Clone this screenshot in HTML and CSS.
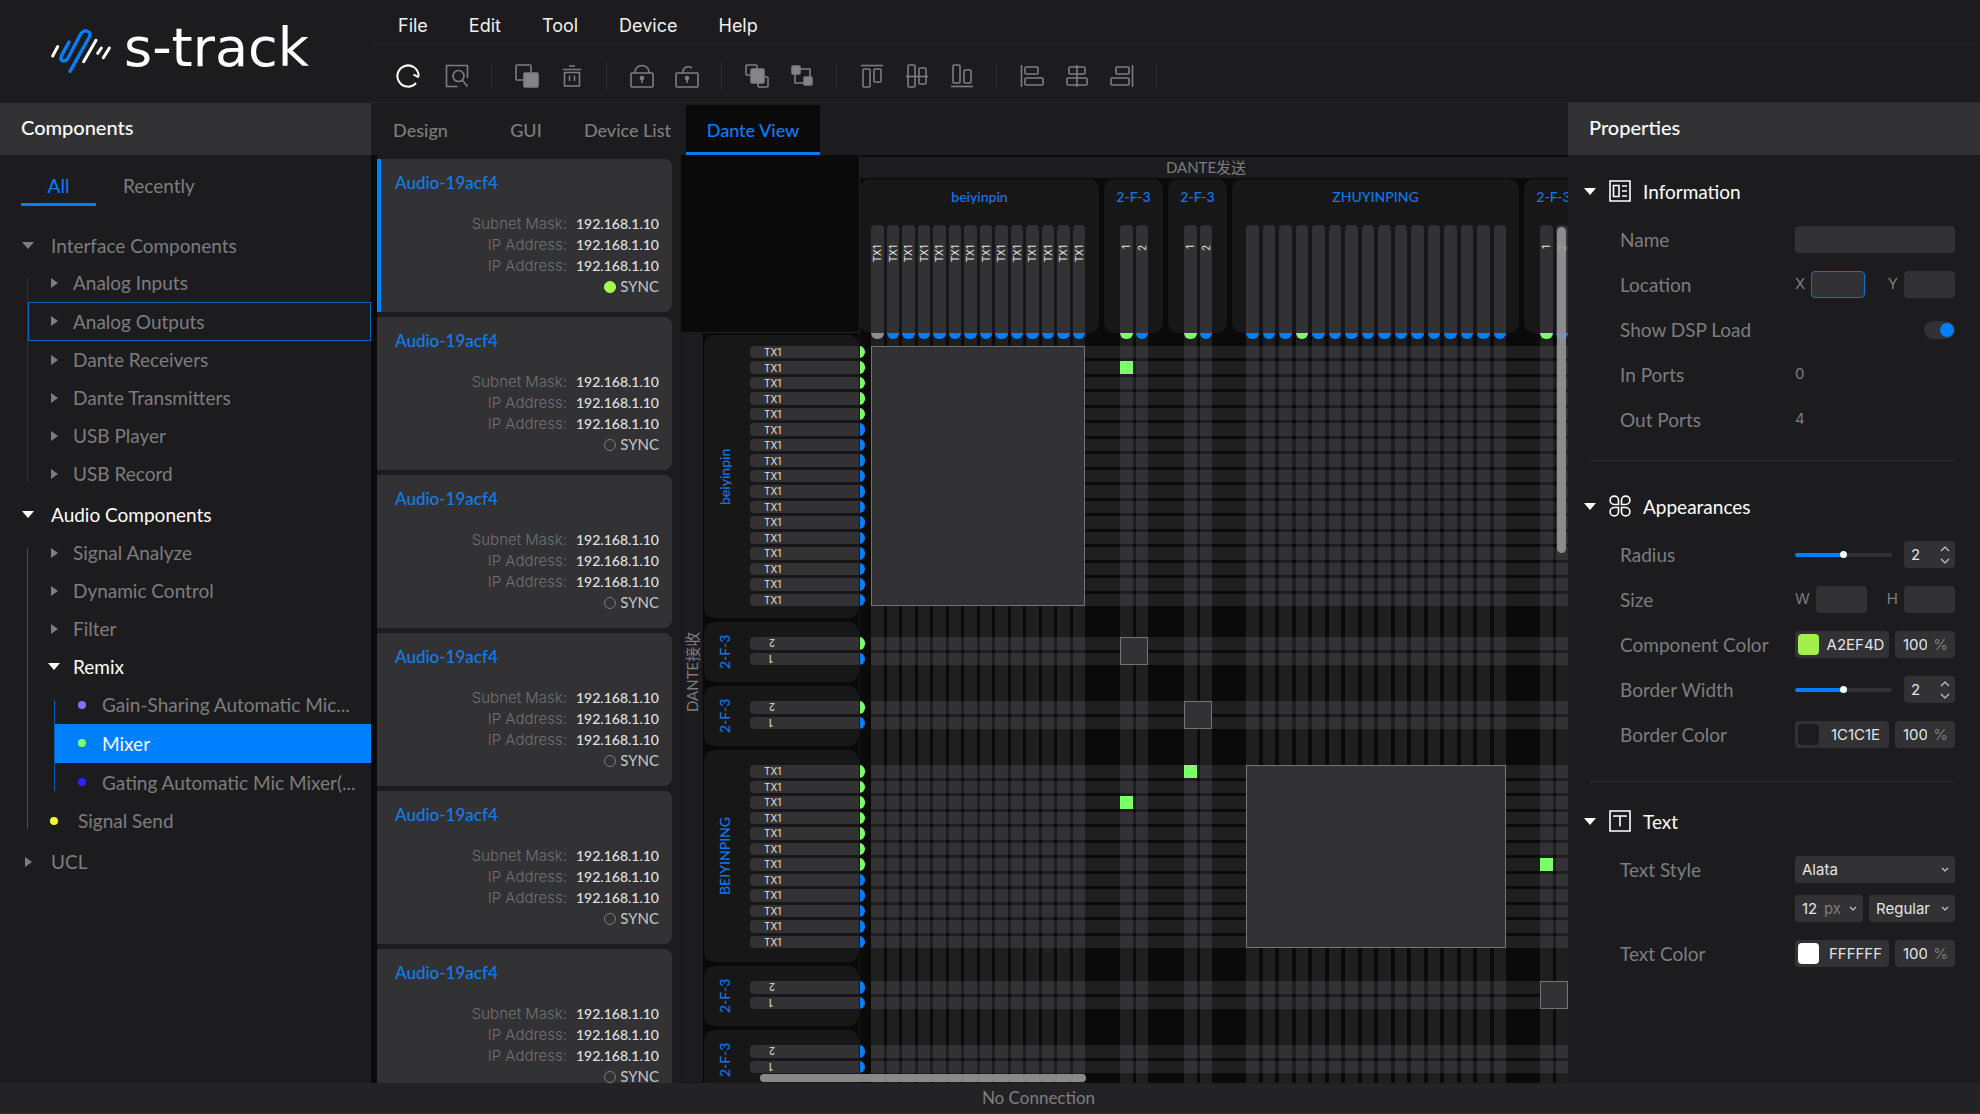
FILE: index.html
```
<!DOCTYPE html>
<html lang="en">
<head>
    <meta charset="UTF-8">
    <meta name="viewport" content="width=device-width, initial-scale=1.0">
    <title>s-track</title>
    <link rel="stylesheet" href="styles.css">
</head>
<body>
    <div class="app">
        <header class="header">
            <div class="logo">
                <svg class="logo-mark" viewBox="30 40 189 141" fill="none" stroke="#fff" stroke-width="9" stroke-linecap="round">
                    <path d="M53 96L38 124M168 77L131 141M184 100L173 116M208 100L190 129"/>
                    <path stroke="#0080ff" stroke-width="10" stroke-linejoin="round" d="M87 82L65 122Q58 138 71 139Q79 139 84 130L122 58Q129 47 140 49Q155 53 148 67L90 170"/>
                </svg>
                <span class="logo-text">s-track</span>
            </div>
            <div class="header-main">
                <nav class="menu">
                    <button type="button">File</button>
                    <button type="button">Edit</button>
                    <button type="button">Tool</button>
                    <button type="button">Device</button>
                    <button type="button">Help</button>
                </nav>
                <div class="toolbar">
                    <div class="tool-group first">
                        <button type="button" class="tool active" aria-label="Refresh">
                            <svg viewBox="0 0 24 24"><path d="M20 19A10.6 10.6 0 1 1 22.6 11.5L22 13L17.5 10.5"/></svg>
                        </button>
                        <button type="button" class="tool" aria-label="Preview">
                            <svg viewBox="0 0 24 24"><path d="M12.500 22.500H1.500V1.500H22.500V14M17.500 16.500L22.500 22.500"/><circle cx="13.500" cy="12" r="5.500"/></svg>
                        </button>
                    </div>
                    <div class="tool-group">
                        <button type="button" class="tool" aria-label="Copy">
                            <svg viewBox="0 0 24 24"><rect x="1" y="1" width="15" height="15" rx="1"/><rect class="solid" x="9" y="9" width="14" height="14" rx="1"/></svg>
                        </button>
                        <button type="button" class="tool" aria-label="Delete">
                            <svg viewBox="0 0 24 24"><path d="M3 5.500H21M9 2H15M4.500 8.500V22H19.500V8.500ZM9.500 11.500V17M14.500 11.500V17"/></svg>
                        </button>
                    </div>
                    <div class="tool-group">
                        <button type="button" class="tool" aria-label="Lock">
                            <svg viewBox="0 0 24 24"><rect x="1" y="9" width="22" height="14" rx="1"/><path d="M5 9V8A7 6.500 0 0 1 19 8V9M12 15V19"/><circle class="solid" cx="12" cy="14" r="1.500"/></svg>
                        </button>
                        <button type="button" class="tool" aria-label="Unlock">
                            <svg viewBox="0 0 24 24"><rect x="1" y="9" width="22" height="14" rx="1"/><path d="M8 9V7A5.500 5 0 0 1 17 4M12 15V19"/><circle class="solid" cx="12" cy="14" r="1.500"/></svg>
                        </button>
                    </div>
                    <div class="tool-group">
                        <button type="button" class="tool" aria-label="Bring to front">
                            <svg viewBox="0 0 24 24"><rect x="1" y="1" width="11" height="10" rx="1"/><rect x="13" y="13" width="10" height="10" rx="1"/><rect class="solid" x="6" y="5" width="13" height="14" rx="1"/></svg>
                        </button>
                        <button type="button" class="tool" aria-label="Send to back">
                            <svg viewBox="0 0 24 24"><rect class="solid" x="2" y="2" width="8" height="8" rx="1"/><rect class="solid" x="14" y="13" width="8" height="8" rx="1"/><path d="M10 5H20V13M5 10V19H14"/></svg>
                        </button>
                    </div>
                    <div class="tool-group">
                        <button type="button" class="tool" aria-label="Align top">
                            <svg viewBox="0 0 24 24"><path d="M1 1.500H23"/><rect x="3" y="5" width="7" height="18" rx="1"/><rect x="14" y="5" width="7" height="13" rx="1"/></svg>
                        </button>
                        <button type="button" class="tool" aria-label="Align middle">
                            <svg viewBox="0 0 24 24"><path d="M1 12.500H23"/><rect x="3" y="1" width="7" height="22" rx="1"/><rect x="14" y="4" width="7" height="16" rx="1"/></svg>
                        </button>
                        <button type="button" class="tool" aria-label="Align bottom">
                            <svg viewBox="0 0 24 24"><path d="M1 22.500H23"/><rect x="3" y="1" width="7" height="18" rx="1"/><rect x="14" y="6" width="7" height="13" rx="1"/></svg>
                        </button>
                    </div>
                    <div class="tool-group">
                        <button type="button" class="tool" aria-label="Align left">
                            <svg viewBox="0 0 24 24"><path d="M1.500 1V23"/><rect x="5" y="3" width="13" height="7" rx="1"/><rect x="5" y="14" width="18" height="7" rx="1"/></svg>
                        </button>
                        <button type="button" class="tool" aria-label="Align center">
                            <svg viewBox="0 0 24 24"><path d="M12 1V23"/><rect x="4" y="3" width="16" height="7" rx="1"/><rect x="2" y="14" width="20" height="7" rx="1"/></svg>
                        </button>
                        <button type="button" class="tool" aria-label="Align right">
                            <svg viewBox="0 0 24 24"><path d="M22.500 1V23"/><rect x="6" y="3" width="13" height="7" rx="1"/><rect x="1" y="14" width="18" height="7" rx="1"/></svg>
                        </button>
                    </div>
                </div>
            </div>
        </header>

        <aside class="sidebar">
            <h2 class="panel-title">Components</h2>
            <div class="filter-tabs">
                <button type="button" class="active">All</button>
                <button type="button">Recently</button>
            </div>
            <ul class="tree">
                <li>
                    <button type="button" class="root-row short"><i class="arrow down"></i>Interface Components</button>
                    <ul class="branch">
                        <li><button type="button" class="row"><i class="arrow"></i>Analog Inputs</button></li>
                        <li><button type="button" class="row outlined"><i class="arrow"></i>Analog Outputs</button></li>
                        <li><button type="button" class="row"><i class="arrow"></i>Dante Receivers</button></li>
                        <li><button type="button" class="row"><i class="arrow"></i>Dante Transmitters</button></li>
                        <li><button type="button" class="row"><i class="arrow"></i>USB Player</button></li>
                        <li><button type="button" class="row"><i class="arrow"></i>USB Record</button></li>
                    </ul>
                </li>
                <li>
                    <button type="button" class="root-row open"><i class="arrow down"></i>Audio Components</button>
                    <ul class="branch open-line">
                        <li><button type="button" class="row"><i class="arrow"></i>Signal Analyze</button></li>
                        <li><button type="button" class="row"><i class="arrow"></i>Dynamic Control</button></li>
                        <li><button type="button" class="row"><i class="arrow"></i>Filter</button></li>
                        <li>
                            <button type="button" class="row open"><i class="arrow down"></i>Remix</button>
                            <ul class="branch leaf-list open-line">
                                <li><button type="button" class="row leaf"><i class="dot purple"></i><span>Gain-Sharing Automatic Mic...</span></button></li>
                                <li><button type="button" class="row leaf tall selected"><i class="dot green"></i><span>Mixer</span></button></li>
                                <li><button type="button" class="row leaf tall"><i class="dot blue"></i><span>Gating Automatic Mic Mixer(...</span></button></li>
                            </ul>
                        </li>
                        <li><button type="button" class="row send"><i class="dot yellow"></i>Signal Send</button></li>
                    </ul>
                </li>
                <li>
                    <button type="button" class="root-row"><i class="arrow"></i>UCL</button>
                </li>
            </ul>
        </aside>

        <main class="workspace">
            <div class="view-tabs">
                <button type="button">Design</button>
                <button type="button">GUI</button>
                <button type="button">Device List</button>
                <button type="button" class="active">Dante View</button>
            </div>
            <div class="view">
                <section class="devices" id="devices"></section>
                <section class="matrix">
                    <div class="corner"></div>
                    <div class="tx">
                        <h3 class="tx-title">DANTE发送</h3>
                        <div class="tx-groups" id="txGroups"></div>
                    </div>
                    <div class="rx">
                        <h3 class="rx-title">DANTE接收</h3>
                        <div class="rx-groups" id="rxGroups"></div>
                    </div>
                    <div class="cross">
                        <div class="tx-stripes" id="txStripes"></div>
                        <div class="rx-stripes" id="rxStripes"></div>
                        <div class="links" id="links"></div>
                    </div>
                    <div class="scroll-y"></div>
                    <div class="scroll-x"></div>
                </section>
            </div>
        </main>

        <aside class="properties">
            <h2 class="panel-title">Properties</h2>

            <section class="section">
                <h3 class="section-title">
                    <i class="arrow down"></i>
                    <svg viewBox="0 0 22 22"><path d="M1 1H21V21H1ZM4.500 5.500H10V16.500H4.500ZM13 6H18M13 11H18M13 16H18"/></svg>
                    Information
                </h3>
                <div class="field">
                    <label for="name">Name</label>
                    <input type="text" id="name">
                </div>
                <div class="field">
                    <span>Location</span>
                    <div class="pair">
                        <label for="locX">X</label>
                        <input type="text" id="locX" class="focused">
                        <label for="locY" class="second">Y</label>
                        <input type="text" id="locY">
                    </div>
                </div>
                <div class="field">
                    <label for="dsp">Show DSP Load</label>
                    <input type="checkbox" id="dsp" class="toggle" checked>
                </div>
                <div class="field">
                    <span>In Ports</span>
                    <output>0</output>
                </div>
                <div class="field">
                    <span>Out Ports</span>
                    <output>4</output>
                </div>
            </section>

            <section class="section appearances">
                <h3 class="section-title">
                    <i class="arrow down"></i>
                    <svg viewBox="0 0 22 22"><path d="M9.500 9.500H5.300A4.200 4.200 0 1 1 9.500 5.300ZM12.500 9.500V5.300A4.200 4.200 0 1 1 16.700 9.500ZM9.500 12.500V16.700A4.200 4.200 0 1 1 5.300 12.500ZM12.500 12.500H16.700A4.200 4.200 0 1 1 12.500 16.700Z"/></svg>
                    Appearances
                </h3>
                <div class="field">
                    <label for="radius">Radius</label>
                    <div class="slider">
                        <input type="range" id="radius" min="0" max="4" value="2">
                        <div class="stepper">
                            <input type="text" value="2" aria-label="Radius value">
                            <svg viewBox="0 0 10 20"><path d="M1 6L5 2L9 6M1 14L5 18L9 14"/></svg>
                        </div>
                    </div>
                </div>
                <div class="field">
                    <span>Size</span>
                    <div class="pair">
                        <label for="sizeW">W</label>
                        <input type="text" id="sizeW">
                        <label for="sizeH" class="second">H</label>
                        <input type="text" id="sizeH">
                    </div>
                </div>
                <div class="field">
                    <label for="compColor">Component Color</label>
                    <div class="color-row">
                        <div class="color"><i class="swatch lime"></i><input type="text" id="compColor" value="A2EF4D"></div>
                        <div class="percent"><input type="text" value="100" aria-label="Component opacity"><span>%</span></div>
                    </div>
                </div>
                <div class="field">
                    <label for="borderWidth">Border Width</label>
                    <div class="slider">
                        <input type="range" id="borderWidth" min="0" max="4" value="2">
                        <div class="stepper">
                            <input type="text" value="2" aria-label="Border width value">
                            <svg viewBox="0 0 10 20"><path d="M1 6L5 2L9 6M1 14L5 18L9 14"/></svg>
                        </div>
                    </div>
                </div>
                <div class="field">
                    <label for="borderColor">Border Color</label>
                    <div class="color-row">
                        <div class="color"><i class="swatch dark"></i><input type="text" id="borderColor" value="1C1C1E"></div>
                        <div class="percent"><input type="text" value="100" aria-label="Border opacity"><span>%</span></div>
                    </div>
                </div>
            </section>

            <section class="section text-section">
                <h3 class="section-title">
                    <i class="arrow down"></i>
                    <svg viewBox="0 0 22 22"><path d="M1 1H21V21H1ZM5 7V6H17V7M11 6V16.500"/></svg>
                    Text
                </h3>
                <div class="field">
                    <label for="font">Text Style</label>
                    <div class="selects">
                        <div class="select wide">
                            <select id="font"><option>Alata</option></select>
                            <svg viewBox="0 0 8 6"><path d="M1 1L4 4L7 1"/></svg>
                        </div>
                        <div class="select size">
                            <select aria-label="Font size"><option>12</option></select>
                            <span>px</span>
                            <svg viewBox="0 0 8 6"><path d="M1 1L4 4L7 1"/></svg>
                        </div>
                        <div class="select">
                            <select aria-label="Font weight"><option>Regular</option></select>
                            <svg viewBox="0 0 8 6"><path d="M1 1L4 4L7 1"/></svg>
                        </div>
                    </div>
                </div>
                <div class="field">
                    <label for="textColor">Text Color</label>
                    <div class="color-row">
                        <div class="color"><i class="swatch white"></i><input type="text" id="textColor" value="FFFFFF"></div>
                        <div class="percent"><input type="text" value="100" aria-label="Text opacity"><span>%</span></div>
                    </div>
                </div>
            </section>
        </aside>

        <footer class="status">No Connection</footer>
    </div>
    <script src="script.js"></script>
</body>
</html>
```
FILE: styles.css
```
* {
    box-sizing: border-box;
}

body {
    margin: 0;
    background-color: #1c1c1e;
    color: #7d7d7f;
    font-family: Lato, "Noto Sans CJK SC", sans-serif;
    font-size: 19px;
}

h2, h3, ul, dl, dd {
    margin: 0;
    padding: 0;
    font-weight: 400;
}

ul {
    list-style: none;
}

button {
    padding: 0;
    border: none;
    background: none;
    color: inherit;
    font: inherit;
    cursor: pointer;
}

svg {
    fill: none;
    stroke: currentColor;
    stroke-width: 2;
}

.app {
    display: grid;
    grid-template-columns: 371px minmax(0, 1fr) 412px;
    grid-template-rows: 103px minmax(0, 1fr) 31px;
    height: 100vh;
    overflow: hidden;
}

/* header */
.header {
    grid-column: 1 / 4;
    display: grid;
    grid-template-columns: 371px 1fr;
}

.logo {
    display: flex;
    align-items: center;
    gap: 11px;
    padding-left: 50px;
    color: #fff;
}

.logo-mark {
    width: 63px;
    height: 47px;
    stroke-width: 9;
}

.logo-text {
    font-family: "DejaVu Sans", sans-serif;
    font-size: 54px;
    line-height: 60px;
    padding-bottom: 8px;
}

.header-main {
    border-bottom: 1px solid #262628;
}

.menu {
    display: flex;
    gap: 41px;
    height: 44px;
    padding: 8px 0 0 27px;
    border-bottom: 1px solid #222224;
    color: #f0f0f0;
    font-family: Inter, sans-serif;
    font-size: 18px;
}

.toolbar {
    display: flex;
    align-items: center;
    height: 58px;
    padding: 5px 0 0 2px;
}

.tool-group {
    display: flex;
    align-items: center;
    gap: 21px;
    height: 26px;
    padding: 0 22px 0 23px;
    border-right: 1px solid #2a2a2c;
}

.tool-group.first {
    gap: 25px;
}

.tool {
    width: 24px;
    height: 24px;
    color: #7d7d7f;
}

.tool svg {
    display: block;
    stroke-width: 1.600;
    stroke-linejoin: round;
}

.tool .solid {
    fill: #858587;
}

.tool.active {
    color: #fff;
}

.tool.active svg {
    stroke-width: 2;
}

.panel-title {
    height: 52px;
    padding-left: 21px;
    background-color: #323234;
    color: #fff;
    font-size: 20px;
    font-weight: 500;
    line-height: 49px;
}

/* components tree */
.sidebar {
    overflow: hidden;
}

.filter-tabs {
    display: flex;
    gap: 27px;
    height: 73px;
    padding: 12px 21px 0;
}

.filter-tabs button {
    height: 39px;
    border-bottom: 3px solid transparent;
}

.filter-tabs .active {
    width: 75px;
    border-color: #0080ff;
    color: #0a7df5;
}

.tree > li + li {
    margin-top: 3px;
}

.tree button {
    display: flex;
    align-items: center;
    width: 100%;
    height: 38px;
    padding-bottom: 1px;
    white-space: nowrap;
    text-align: left;
}

.root-row {
    padding-left: 22px;
}

.tree .root-row.short {
    height: 36px;
}

.root-row .arrow {
    margin-right: 17px;
}

.tree .open {
    color: #fff;
}

.arrow {
    display: flex;
    justify-content: center;
    flex: none;
    width: 12px;
}

.arrow::before {
    content: "";
    border-left: 7px solid currentColor;
    border-top: 5px solid transparent;
    border-bottom: 5px solid transparent;
}

.arrow.down::before {
    border-left: 6px solid transparent;
    border-right: 6px solid transparent;
    border-top: 7px solid currentColor;
    border-bottom: none;
}

.branch {
    position: relative;
    padding-left: 28px;
}

.branch::before {
    content: "";
    position: absolute;
    top: 14px;
    bottom: 11px;
    left: 27px;
    width: 1px;
    background-color: #323234;
}

.branch.open-line::before {
    background-color: #0a5cab;
}

.branch.leaf-list {
    padding-left: 26px;
}

.branch.leaf-list::before {
    left: 26px;
}

.row {
    padding-left: 20px;
}

.row .arrow {
    margin-right: 13px;
}

.tree .row.outlined {
    height: 39px;
    padding-left: 19px;
    border: 1px solid #0a64bd;
}

.dot {
    flex: none;
    width: 8px;
    height: 8px;
    border-radius: 50%;
}

.purple { background-color: #8b6cf5; }
.green { background-color: #7dff6b; }
.blue { background-color: #2a22ff; }
.yellow { background-color: #f5ff2b; }

.row.leaf {
    gap: 16px;
    padding-left: 24px;
}

.tree .row.tall {
    height: 39px;
}

.row.selected {
    background-color: #0080ff;
    color: #fff;
}

.row.send {
    gap: 20px;
    padding-left: 22px;
}

/* workspace */
.workspace {
    display: flex;
    flex-direction: column;
    min-width: 0;
}

.view-tabs {
    display: grid;
    grid-template-columns: 99px 112px 91px 13px 134px;
    flex: none;
    height: 52px;
    padding-top: 2px;
    font-size: 18px;
    font-weight: 500;
}

.view-tabs .active {
    grid-column: 5;
    border-top: 3px solid #0a0a0a;
    border-bottom: 3px solid #0a7af0;
    background-color: #0a0a0a;
    color: #0a7df5;
}

.view {
    display: grid;
    grid-template-columns: 310px minmax(0, 1fr);
    flex: 1;
    min-height: 0;
}

.devices {
    display: flex;
    flex-direction: column;
    gap: 5px;
    padding: 4px 9px 0 0;
    border-left: 6px solid #0a0a0a;
    overflow: hidden;
}

.card {
    flex: none;
    height: 153px;
    padding: 12px 13px 0 18px;
    border-radius: 0 8px 8px 0;
    background-color: #323234;
    font-size: 14px;
    line-height: 21px;
}

.card.active {
    padding-left: 14px;
    border-left: 4px solid #0080ff;
}

.card-name {
    margin-bottom: 18px;
    color: #127de8;
    font-size: 17px;
    font-weight: 500;
    line-height: 24px;
}

.card dl {
    display: grid;
    grid-template-columns: 1fr auto;
    column-gap: 9px;
}

.card dt {
    color: #707072;
    font-family: Inter, sans-serif;
    font-size: 15px;
    font-weight: 300;
    text-align: right;
}

.card dd {
    color: #e0e0e2;
    font-weight: 500;
}

.sync {
    display: flex;
    align-items: center;
    justify-content: flex-end;
    gap: 4px;
    color: #c8c8ca;
    font-size: 15px;
}

.sync i {
    width: 12px;
    height: 12px;
    border: 1px solid #7d7d7f;
    border-radius: 50%;
}

.card.active .sync i {
    border-color: #a8ff4b;
    background-color: #a8ff4b;
}

/* routing matrix */
.matrix {
    position: relative;
    display: grid;
    grid-template-columns: 178px minmax(0, 1fr);
    grid-template-rows: 178px minmax(0, 1fr);
    background-color: #0a0a0a;
    overflow: hidden;
}

.corner {
    border-bottom: 1px solid #222224;
}

.tx {
    padding-top: 2px;
    border-left: 1px solid #222224;
    overflow: hidden;
}

.tx-title {
    height: 21px;
    margin-bottom: 1px;
    padding-right: 16px;
    background-color: #1c1c1e;
    font-size: 15px;
    line-height: 20px;
    text-align: center;
}

.tx-groups, .tx-stripes {
    display: flex;
    gap: 5px;
}

.tx-group {
    flex: none;
    height: 154px;
    border-radius: 10px;
    background-color: #171717;
}

.group-name {
    color: #0a7af0;
    font-size: 14px;
    font-weight: 500;
}

.tx-group .group-name {
    height: 46px;
    line-height: 36px;
    text-align: center;
}

.ports {
    display: grid;
    height: 108px;
}

.port {
    display: flex;
    border-radius: 4px 4px 0 0;
    background-color: #323234;
    color: #e0e0e0;
    font-family: Inter, sans-serif;
    font-size: 10px;
    line-height: 12px;
}

.tx-group .port {
    justify-content: center;
    padding-top: 20px;
}

.tx-group .port span {
    writing-mode: vertical-rl;
    transform: rotate(180deg);
    align-self: flex-start;
}

.rx {
    display: flex;
    overflow: hidden;
}

.rx-title {
    display: flex;
    align-items: center;
    justify-content: center;
    flex: none;
    width: 22px;
    padding-top: 72px;
    border: 1px solid #161618;
    background-color: #1c1c1e;
    font-size: 15px;
    line-height: 20px;
    text-orientation: sideways;
    transform: rotate(180deg);
}

.rx-title, .rx-group .group-name {
    writing-mode: vertical-rl;
}

.rx-groups {
    display: flex;
    flex-direction: column;
    flex: 1;
    gap: 4px;
    padding: 2px 0 0 1px;
}

.rx-group {
    display: flex;
    flex: none;
    border-radius: 10px;
    background-color: #171717;
}

.rx-group .group-name {
    width: 46px;
    line-height: 42px;
    text-align: center;
    transform: rotate(180deg);
}

.rx-group .ports {
    flex: 1;
}

.rx-group .port {
    align-items: center;
    padding-left: 14px;
    border-radius: 4px 0 0 4px;
}

.rx-group .port.flip {
    padding-left: 19px;
}

.rx-group .flip span {
    transform: rotate(180deg);
}

.cross {
    position: relative;
    overflow: hidden;
    border-left: 1px solid #161618;
}

.tx-stripes, .rx-stripes, .links {
    position: absolute;
    inset: 0;
}

.stripe-group {
    display: grid;
    flex: none;
}

.stripe {
    background-color: rgba(245, 245, 255, 0.09);
}

.stripe::before {
    content: "";
    display: block;
    background-color: #0080ff;
}

.stripe.on::before {
    background-color: #7dff6b;
}

.stripe.off::before {
    background-color: #8e8e90;
}

.tx-stripes .stripe::before {
    height: 6px;
    border-radius: 0 0 6px 6px;
}

.rx-stripes {
    display: flex;
    flex-direction: column;
    gap: 4px;
    padding-top: 2px;
}

.rx-stripes .stripe {
    margin-left: 11px;
}

.rx-stripes .stripe::before {
    width: 6px;
    height: 100%;
    margin-left: -12px;
    border-radius: 0 6px 6px 0;
}

.links {
    display: grid;
    column-gap: 5px;
    row-gap: 4px;
    padding-top: 2px;
}

.block {
    border: 1px solid #747476;
    background-color: #323234;
}

.point-cell {
    display: grid;
}

.point {
    background-color: #7dff6b;
}

.scroll-y, .scroll-x {
    position: absolute;
    border-radius: 5px;
    background-color: rgba(150, 150, 150, 0.9);
}

.scroll-y {
    top: 72px;
    right: 2px;
    width: 9px;
    height: 326px;
}

.scroll-x {
    bottom: 1px;
    left: 79px;
    width: 326px;
    height: 8px;
}

/* properties */
.properties {
    overflow: hidden;
}

.section {
    margin: 0 25px 0 22px;
    padding: 32px 0 18px;
    border-bottom: 1px solid #2a2a2c;
}

.panel-title + .section {
    padding-top: 23px;
}

.section.appearances {
    padding-bottom: 24px;
}

.section.text-section {
    padding-top: 26px;
    border-bottom: none;
}

.section-title {
    display: flex;
    align-items: center;
    height: 26px;
    margin: 0 0 13px -6px;
    color: #fff;
    font-size: 19px;
}

.section-title svg {
    width: 22px;
    height: 22px;
    margin: 0 12px 0 13px;
    stroke-width: 1.600;
}

.field {
    display: grid;
    grid-template-columns: 1fr 160px;
    padding: 9px 0 9px 30px;
    line-height: 27px;
}

.field input, .field select, .field output, .pair label, .percent span, .select span {
    font-family: Inter, sans-serif;
    font-size: 15px;
}

.field input[type="text"], .field select {
    width: 100%;
    min-width: 0;
    height: 27px;
    padding: 0;
    border: none;
    border-radius: 4px;
    outline: none;
    background-color: #323234;
    color: #e4e4e6;
}

.pair {
    display: grid;
    grid-template-columns: auto 51px 1fr 51px;
    column-gap: 6px;
}

.pair .second {
    text-align: right;
}

.pair label {
    line-height: 25px;
}

.field .pair .focused {
    width: 54px;
    border: 1px solid #0a6fd4;
}

.toggle {
    display: flex;
    align-items: center;
    justify-content: flex-end;
    justify-self: end;
    align-self: center;
    width: 31px;
    height: 18px;
    margin: 0;
    padding: 0 1px;
    border-radius: 9px;
    background-color: #323234;
    appearance: none;
}

.toggle::before {
    content: "";
    width: 14px;
    height: 14px;
    border-radius: 50%;
    background-color: #0080ff;
}

.field output {
    line-height: 25px;
}

.slider {
    display: grid;
    grid-template-columns: 97px 51px;
    justify-content: space-between;
    align-items: center;
}

.slider input[type="range"] {
    width: 100%;
    height: 4px;
    margin: 0;
    border-radius: 2px;
    background: linear-gradient(to right, #0080ff 50%, #323234 50%);
    appearance: none;
}

.slider input[type="range"]::-webkit-slider-thumb {
    width: 7px;
    height: 7px;
    border-radius: 50%;
    background-color: #fff;
    appearance: none;
}

.stepper, .color, .percent, .select {
    position: relative;
    display: flex;
    align-items: center;
    height: 27px;
    border-radius: 4px;
    background-color: #323234;
}

.stepper {
    padding: 0 5px 0 7px;
}

.stepper svg {
    flex: none;
    width: 10px;
    height: 20px;
    color: #c8c8ca;
    stroke-width: 1.200;
}

.color-row {
    display: grid;
    grid-template-columns: 94px 60px;
    justify-content: space-between;
}

.color {
    gap: 6px;
    padding: 0 3px;
}

.field .color input {
    text-align: center;
}

.swatch {
    flex: none;
    width: 21px;
    height: 21px;
    border-radius: 4px;
}

.lime { background-color: #a2ef4d; }
.dark { background-color: #1c1c1e; }
.white { background-color: #fff; }

.percent {
    gap: 6px;
    padding: 0 7px 0 8px;
}

.selects {
    display: grid;
    grid-template-columns: 68px 86px;
    justify-content: space-between;
    row-gap: 12px;
}

.select.wide {
    grid-column: 1 / 3;
}

.field .select select {
    padding-left: 7px;
    appearance: none;
}

.select svg {
    position: absolute;
    right: 6px;
    width: 8px;
    height: 6px;
    color: #c8c8ca;
    stroke-width: 1.200;
    pointer-events: none;
}

.select span {
    position: absolute;
    left: 29px;
    pointer-events: none;
}

/* status bar */
.status {
    grid-column: 1 / 4;
    padding-left: 97px;
    border-bottom: 1px solid #323234;
    background-color: #232325;
    font-size: 17px;
    line-height: 30px;
    text-align: center;
}
```
FILE: script.js
```
// size: group width/height, pad: space before the first port, span: space the ports share
var txGroups = [
    { name: "beiyinpin", size: 239, pad: 11, span: 214, gap: 3, ports: fill(14, "TX1"), on: [], off: [0] },
    { name: "2-F-3", size: 59, pad: 16, span: 28, gap: 3, ports: ["1", "2"], on: [0] },
    { name: "2-F-3", size: 59, pad: 16, span: 28, gap: 3, ports: ["1", "2"], on: [0] },
    { name: "ZHUYINPING", size: 287, pad: 14, span: 260, gap: 4, ports: fill(16, ""), on: [3] },
    { name: "2-F-3", size: 59, pad: 16, span: 28, gap: 3, ports: ["1", "2"], on: [0] }
];

var rxGroups = [
    { name: "beiyinpin", size: 283, pad: 11, span: 260, gap: 3, ports: fill(17, "TX1"), on: [0, 1, 2, 3, 4] },
    { name: "2-F-3", size: 60, pad: 15, span: 28, gap: 3, ports: ["2", "1"], on: [0] },
    { name: "2-F-3", size: 60, pad: 15, span: 28, gap: 3, ports: ["2", "1"], on: [0] },
    { name: "BEIYINPING", size: 212, pad: 15, span: 183, gap: 3, ports: fill(12, "TX1"), on: [0, 1, 2, 3, 4, 5, 6] },
    { name: "2-F-3", size: 60, pad: 15, span: 28, gap: 3, ports: ["2", "1"], on: [] },
    { name: "2-F-3", size: 60, pad: 15, span: 28, gap: 3, ports: ["2", "1"], on: [] }
];

// [rx group, tx group]
var blocks = [[0, 0], [1, 1], [2, 2], [3, 3], [4, 4]];

// [rx group, rx port, tx group, tx port]
var points = [[0, 1, 1, 0], [3, 0, 2, 0], [3, 2, 1, 0], [3, 6, 4, 0]];

function fill(n, text) {
    return new Array(n).fill(text);
}

function tracks(group) {
    return "repeat(" + group.ports.length + ", minmax(0, 1fr))";
}

function state(group, i) {
    if (group.on.indexOf(i) > -1) return " on";
    if (group.off && group.off.indexOf(i) > -1) return " off";
    return "";
}

function el(parent, className, html) {
    var node = document.createElement("div");
    node.className = className;
    node.innerHTML = html || "";
    parent.appendChild(node);
    return node;
}

function drawTx() {
    var heads = document.getElementById("txGroups");
    var stripes = document.getElementById("txStripes");
    txGroups.forEach(function(group) {
        var head = el(heads, "tx-group", '<div class="group-name">' + group.name + "</div>");
        head.style.width = group.size + "px";
        var ports = el(head, "ports");
        var lines = el(stripes, "stripe-group");
        lines.style.width = group.size + "px";
        lines.style.paddingLeft = group.pad + "px";
        lines.style.paddingRight = group.size - group.pad - group.span + "px";
        ports.style.marginLeft = group.pad + "px";
        ports.style.width = group.span + "px";
        ports.style.columnGap = lines.style.columnGap = group.gap + "px";
        ports.style.gridTemplateColumns = lines.style.gridTemplateColumns = tracks(group);
        group.ports.forEach(function(text, i) {
            el(ports, "port", "<span>" + text + "</span>");
            el(lines, "stripe" + state(group, i));
        });
    });
}

function drawRx() {
    var heads = document.getElementById("rxGroups");
    var stripes = document.getElementById("rxStripes");
    rxGroups.forEach(function(group) {
        var head = el(heads, "rx-group", '<div class="group-name">' + group.name + "</div>");
        head.style.height = group.size + "px";
        var ports = el(head, "ports");
        var lines = el(stripes, "stripe-group");
        lines.style.height = group.size + "px";
        lines.style.paddingTop = group.pad + "px";
        lines.style.paddingBottom = group.size - group.pad - group.span + "px";
        ports.style.marginTop = group.pad + "px";
        ports.style.height = group.span + "px";
        ports.style.rowGap = lines.style.rowGap = group.gap + "px";
        ports.style.gridTemplateRows = lines.style.gridTemplateRows = tracks(group);
        group.ports.forEach(function(text, i) {
            el(ports, text === "TX1" ? "port" : "port flip", "<span>" + text + "</span>");
            el(lines, "stripe" + state(group, i));
        });
    });
}

function placeCell(node, rx, tx) {
    node.style.gridArea = (rx + 1) + " / " + (tx + 1);
    node.style.margin = rxGroups[rx].pad + "px 0 0 " + txGroups[tx].pad + "px";
    node.style.width = txGroups[tx].span + "px";
    node.style.height = rxGroups[rx].span + "px";
}

function drawLinks() {
    var links = document.getElementById("links");
    links.style.gridTemplateColumns = txGroups.map(function(g) { return g.size + "px"; }).join(" ");
    links.style.gridTemplateRows = rxGroups.map(function(g) { return g.size + "px"; }).join(" ");
    blocks.forEach(function(b) {
        placeCell(el(links, "block"), b[0], b[1]);
    });
    points.forEach(function(p) {
        var cell = el(links, "point-cell");
        placeCell(cell, p[0], p[2]);
        cell.style.gap = "3px";
        cell.style.gridTemplateRows = tracks(rxGroups[p[0]]);
        cell.style.gridTemplateColumns = tracks(txGroups[p[2]]);
        el(cell, "point").style.gridArea = (p[1] + 1) + " / " + (p[3] + 1);
    });
}

function drawDevices() {
    var list = document.getElementById("devices");
    for (var i = 0; i < 6; i++) {
        el(list, i === 0 ? "card active" : "card",
            '<div class="card-name">Audio-19acf4</div>' +
            "<dl><dt>Subnet Mask:</dt><dd>192.168.1.10</dd>" +
            "<dt>IP Address:</dt><dd>192.168.1.10</dd>" +
            "<dt>IP Address:</dt><dd>192.168.1.10</dd></dl>" +
            '<div class="sync"><i></i>SYNC</div>');
    }
}

drawDevices();
drawTx();
drawRx();
drawLinks();
```
